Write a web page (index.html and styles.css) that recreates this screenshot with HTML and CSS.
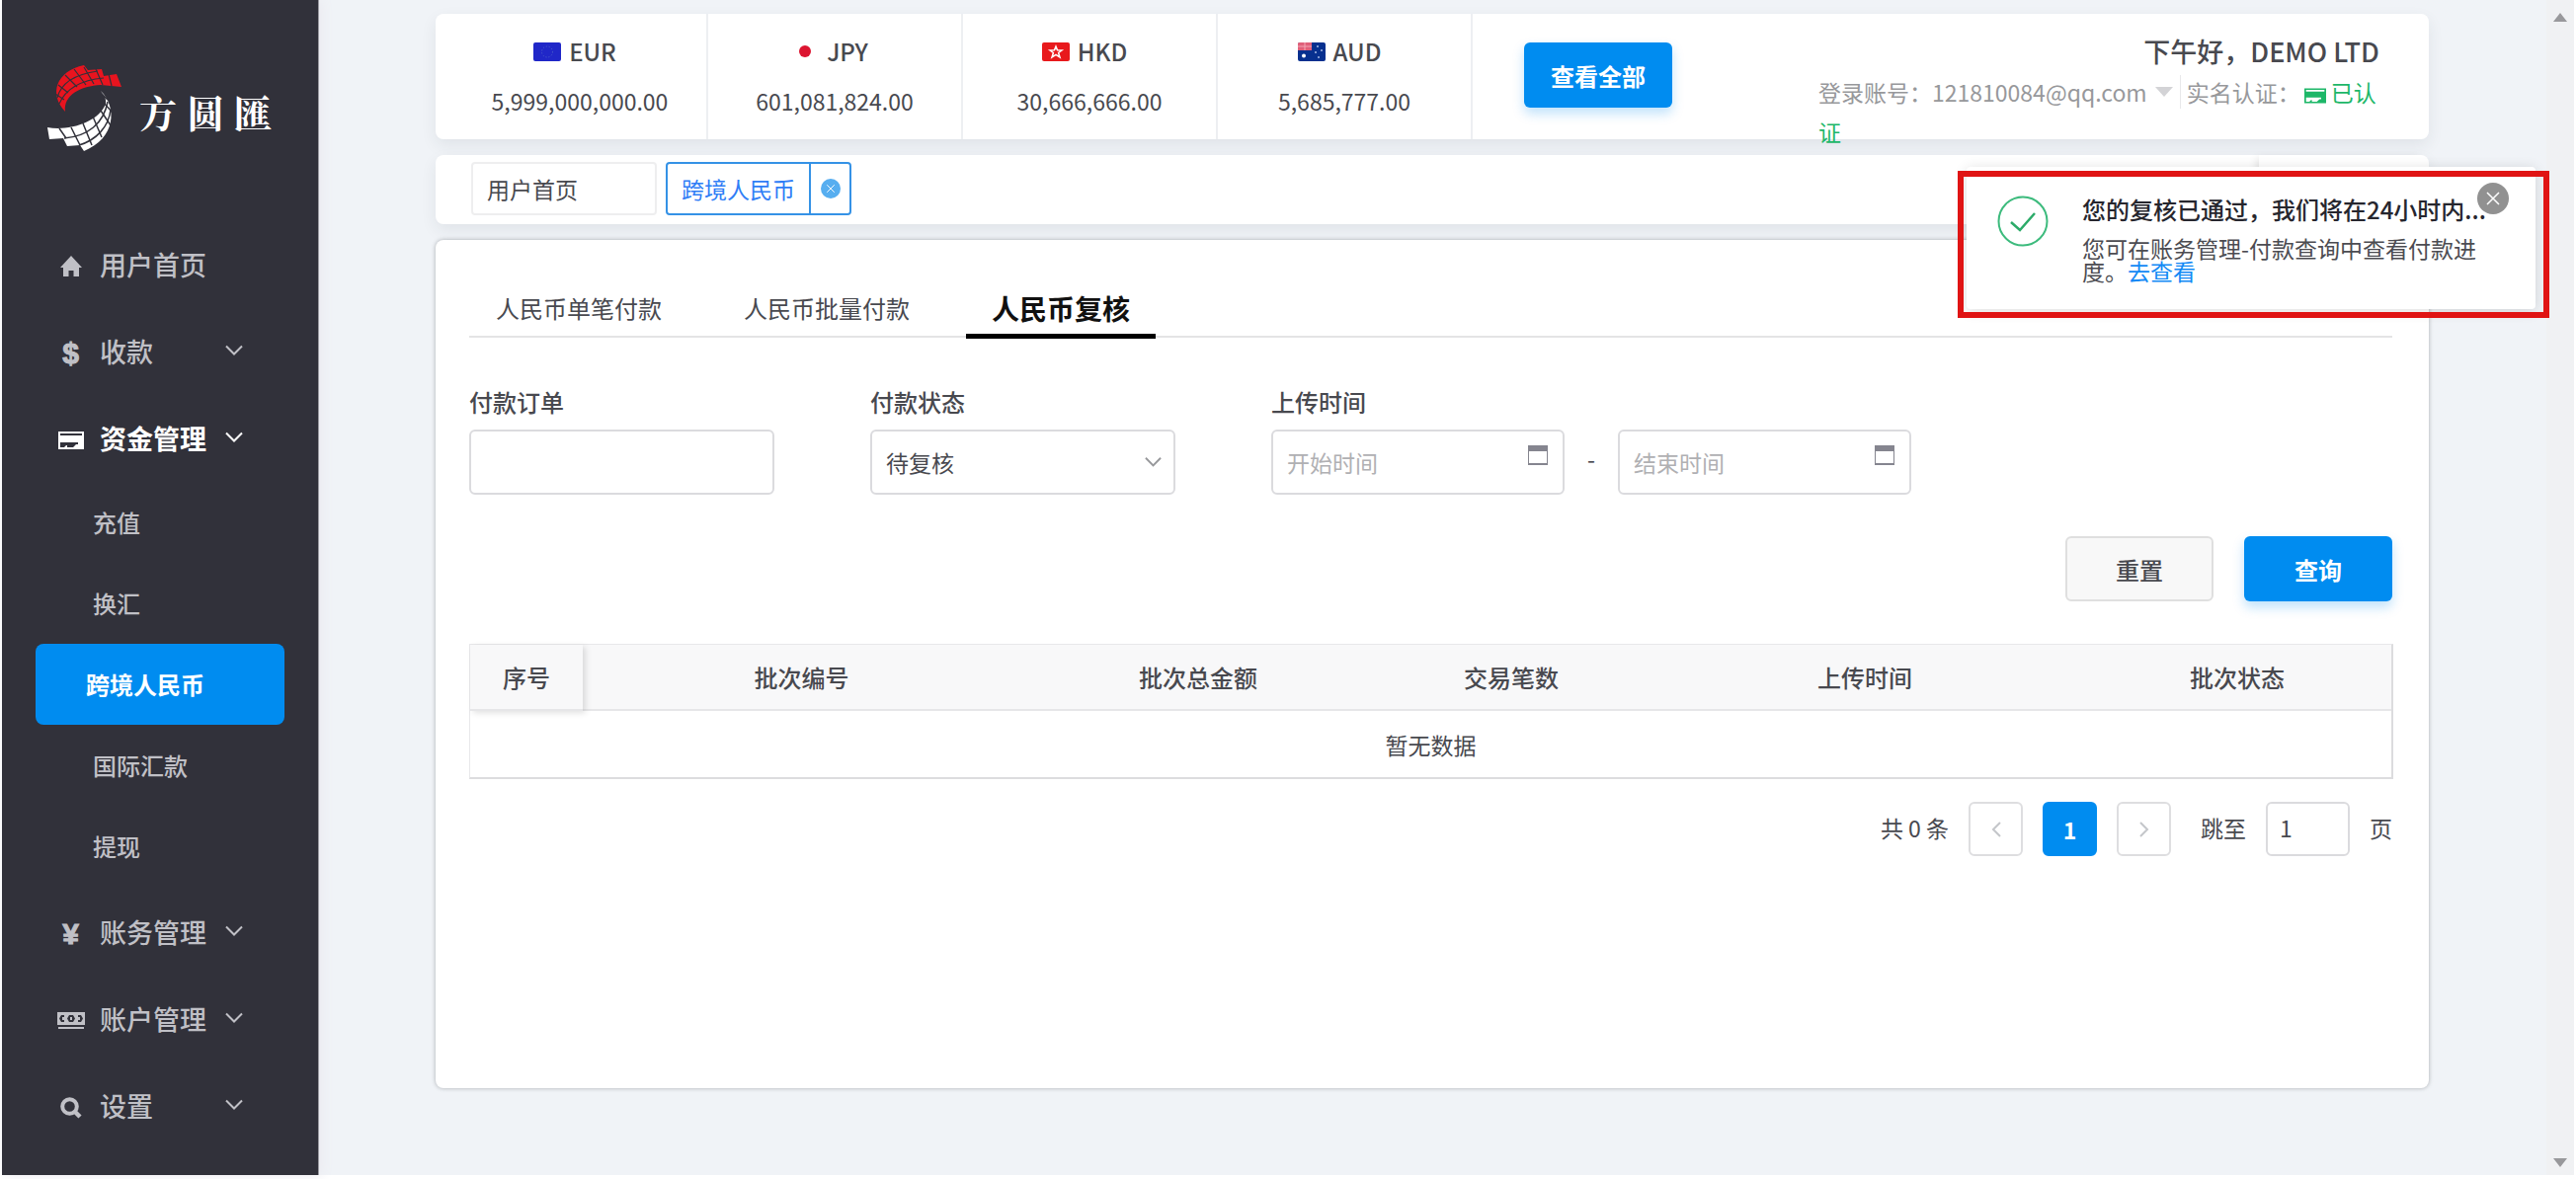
FILE: index.html
```html
<!DOCTYPE html>
<html lang="zh-CN">
<head>
<meta charset="utf-8">
<title>方圆匯 - 人民币复核</title>
<link rel="stylesheet" href="styles.css">
</head>
<body>
<svg class="defs" aria-hidden="true">
  <symbol id="chevron" viewBox="0 0 18 12"><path d="M1 1.500L9 9.500L17 1.500" fill="none" stroke="currentColor" stroke-width="2"/></symbol>
  <symbol id="card" viewBox="0 0 26 18"><path fill="currentColor" fill-rule="evenodd" d="M0 0H26V18H0ZM2 2V4H24V2ZM2 11V16H6L8 14H9V16H15L18 13H20V11Z"/></symbol>
  <symbol id="calendar" viewBox="0 0 20 20"><path fill="currentColor" fill-rule="evenodd" d="M0 0H20V20H0ZM1 6V18H19V6Z"/></symbol>
  <symbol id="close" viewBox="0 0 32 32"><circle cx="16" cy="16" r="16" fill="currentColor"/><path d="M10 10L22 22M22 10L10 22" stroke="#fff" stroke-width="1.500"/></symbol>
</svg>
<div class="shell">
  <aside class="sidebar">
    <div class="brand">
      <svg class="brand-mark" viewBox="0 0 78 92" aria-hidden="true">
        <path fill="#e8141f" d="M19 50C2 32 10 9 38 3L42 8L56 7L58 14L71 12L76 25L55 23C35 24 17 33 19 50Z"/>
        <g fill="none" stroke="#31313a" stroke-width="1.200"><path d="M11 36C15 20 30 12 52 9M13 42C20 26 36 18 58 16"/><path d="M12 23L22 31M19 13L31 25M28 7L40 23M38 5L48 22M50 7L57 23M63 12L66 24M9 32L18 38"/></g>
        <path fill="#fff" d="M1 66C22 70 53 61 60 42C61 36 57 32 55 29C72 46 70 77 38 90L34 84L21 85L17 77L3 78Z"/>
        <g fill="none" stroke="#31313a" stroke-width="1.500"><path d="M18 77C42 75 58 62 62 40M33 84C50 79 63 66 65 48"/><path d="M13 67L20 77M25 66L34 84M37 62L46 84M47 55L56 76M53 46L65 64M56 39L67 51M57 33L62 38"/></g>
      </svg>
      <div class="brand-name"><span>方</span><span>圆</span><span>匯</span></div>
    </div>
    <nav class="menu">
      <a class="item" href="#"><svg viewBox="0 0 22 22" width="22" height="22"><path fill="currentColor" d="M11 0L22 12H19V21H13.500V15H8.500V21H3V12H0Z"/></svg><span>用户首页</span></a>
      <a class="item" href="#"><b class="sign">$</b><span>收款</span><svg class="chev"><use href="#chevron"/></svg></a>
      <a class="item current" href="#"><svg width="26" height="18"><use href="#card"/></svg><span>资金管理</span><svg class="chev"><use href="#chevron"/></svg></a>
      <div class="submenu">
        <a href="#">充值</a>
        <a href="#">换汇</a>
        <a class="active" href="#">跨境人民币</a>
        <a href="#">国际汇款</a>
        <a href="#">提现</a>
      </div>
      <a class="item" href="#"><b class="sign">¥</b><span>账务管理</span><svg class="chev"><use href="#chevron"/></svg></a>
      <a class="item" href="#"><svg viewBox="0 0 28 18" width="28" height="18"><path fill="currentColor" fill-rule="evenodd" d="M0 0H28V13H0ZM4 3L2 6.500L4 10H7V8H5V5H7V3ZM12 3L10 6.500L12 10H16L18 6.500L16 3ZM13 5H15V8H13ZM21 3V5H23V8H21V10H24L26 6.500L24 3Z"/><path fill="currentColor" d="M1 15H27V17H1Z"/></svg><span>账户管理</span><svg class="chev"><use href="#chevron"/></svg></a>
      <a class="item" href="#"><svg viewBox="0 0 22 22" width="22" height="22"><circle cx="9.500" cy="9.500" r="7.300" fill="none" stroke="currentColor" stroke-width="4"/><path d="M14 14L20 20" stroke="currentColor" stroke-width="4.500"/></svg><span>设置</span><svg class="chev"><use href="#chevron"/></svg></a>
    </nav>
  </aside>

  <main class="content">
    <header class="topbar">
      <div class="currency">
        <div class="code"><svg viewBox="0 0 28 19" width="28" height="19"><rect width="28" height="19" rx="2" fill="#2027c8"/><circle cx="14" cy="9.500" r="5.500" fill="none" stroke="#4d64c8" stroke-dasharray="1 2"/></svg>EUR</div>
        <div class="amount">5,999,000,000.00</div>
      </div>
      <div class="currency">
        <div class="code"><svg viewBox="0 0 28 19" width="28" height="19"><circle cx="14" cy="9" r="6" fill="#dc1430"/></svg>JPY</div>
        <div class="amount">601,081,824.00</div>
      </div>
      <div class="currency">
        <div class="code"><svg viewBox="0 0 28 19" width="28" height="19"><rect width="28" height="19" rx="2" fill="#e8191c"/><path d="M14 4L15.500 7.800L20 8L16.600 10.500L18 15L14 12.400L10 15L11.400 10.500L8 8L12.500 7.800Z" fill="#e8191c" stroke="#fff" stroke-width="1.500"/></svg>HKD</div>
        <div class="amount">30,666,666.00</div>
      </div>
      <div class="currency">
        <div class="code"><svg viewBox="0 0 28 19" width="28" height="19"><rect width="28" height="19" rx="2" fill="#07308f"/><path d="M1 0H14V8H0V1Z" fill="#e0607a"/><path d="M0 4H14M7 0V8" stroke="#f3a6b4" stroke-width="1"/><circle cx="6" cy="13.500" r="2" fill="#fff"/><path d="M20 3V5M18 9V11M24 7V9M21 14V16" stroke="#a9bbe6" stroke-width="1.500"/></svg>AUD</div>
        <div class="amount">5,685,777.00</div>
      </div>
      <button class="btn primary view-all" type="button">查看全部</button>
      <div class="account">
        <div class="greeting">下午好，DEMO LTD</div>
        <div class="details">登录账号：121810084@qq.com<i class="caret"></i><span class="verify">实名认证：</span><span class="verified"><svg width="22" height="16"><use href="#card"/></svg>已认证</span></div>
      </div>
    </header>

    <nav class="page-tabs">
      <a class="page-tab" href="#">用户首页</a>
      <div class="page-tab open"><a href="#">跨境人民币</a><button type="button" aria-label="关闭"><svg width="20" height="20"><use href="#close"/></svg></button></div>
      <div class="tab-tools"></div>
    </nav>

    <section class="panel">
      <nav class="tabs">
        <a href="#">人民币单笔付款</a>
        <a href="#">人民币批量付款</a>
        <a class="active" href="#">人民币复核</a>
      </nav>
      <form class="filters">
        <div class="field">
          <label for="order">付款订单</label>
          <input id="order" type="text">
        </div>
        <div class="field">
          <label for="status">付款状态</label>
          <div class="control"><select id="status"><option>待复核</option></select><svg class="select-arrow"><use href="#chevron"/></svg></div>
        </div>
        <div class="field">
          <label for="start">上传时间</label>
          <div class="range">
            <div class="control date"><input id="start" type="text" placeholder="开始时间"><svg class="cal"><use href="#calendar"/></svg></div>
            <span class="dash">-</span>
            <div class="control date"><input type="text" placeholder="结束时间" aria-label="结束时间"><svg class="cal"><use href="#calendar"/></svg></div>
          </div>
        </div>
      </form>
      <div class="actions">
        <button class="btn" type="button">重置</button>
        <button class="btn primary" type="button">查询</button>
      </div>
      <table class="data">
        <colgroup><col class="c1"><col class="c2"><col class="c3"><col class="c4"><col class="c5"><col class="c6"></colgroup>
        <thead><tr><th>序号</th><th>批次编号</th><th>批次总金额</th><th>交易笔数</th><th>上传时间</th><th>批次状态</th></tr></thead>
        <tbody><tr><td colspan="6">暂无数据</td></tr></tbody>
      </table>
      <div class="pager">
        <span class="total">共 0 条</span>
        <button type="button" aria-label="上一页"><svg viewBox="0 0 12 18" width="12" height="18"><path d="M10 2L3 9L10 16" fill="none" stroke="#c4c6ca" stroke-width="2"/></svg></button>
        <button class="active" type="button">1</button>
        <button type="button" aria-label="下一页"><svg viewBox="0 0 12 18" width="12" height="18"><path d="M2 2L9 9L2 16" fill="none" stroke="#c4c6ca" stroke-width="2"/></svg></button>
        <label class="jump" for="page">跳至</label>
        <input id="page" type="text" value="1">
        <span>页</span>
      </div>
    </section>
  </main>

  <div class="scrollbar" aria-hidden="true"><i class="up"></i><i class="down"></i></div>

  <div class="highlight">
    <div class="notice" role="status">
      <svg class="ok" viewBox="0 0 52 52" aria-hidden="true"><circle cx="26" cy="26" r="24.500" fill="none" stroke="#3dbb7d" stroke-width="2"/><path d="M14 27L23 35L38 18" fill="none" stroke="#2cab69" stroke-width="2.500"/></svg>
      <div class="message">
        <strong>您的复核已通过，我们将在24小时内...</strong>
        <p>您可在账务管理-付款查询中查看付款进度。<a href="#">去查看</a></p>
      </div>
      <button type="button" aria-label="关闭通知"><svg width="32" height="32"><use href="#close"/></svg></button>
    </div>
  </div>
</div>
</body>
</html>
```
FILE: styles.css
```css
* { box-sizing: border-box; }

body {
  margin: 0;
  padding: 0 2px 4px;
  background: #fff;
  color: #48494f;
  font-family: "Noto Sans CJK SC", sans-serif;
  font-size: 23px;
}

a { color: inherit; text-decoration: none; }
button, input, select { font: inherit; color: inherit; }
button { cursor: pointer; }
.defs { display: none; }

.shell {
  position: relative;
  display: flex;
  min-height: calc(100vh - 4px);
  background: #f0f3f7;
}

/* Sidebar */
.sidebar {
  flex: 0 0 320px;
  background: #31313a;
  color: #c0c0c6;
  box-shadow: 1px 0 0 #9c9ca3, 4px 0 12px #ebeaf0;
}

.brand {
  display: flex;
  align-items: flex-start;
  padding: 63px 0 0 45px;
  height: 223px;
}

.brand-mark { width: 78px; height: 92px; }

.brand-name {
  display: flex;
  gap: 10px;
  margin: 23px 0 0 16px;
  color: #fff;
  font-family: "Noto Serif CJK SC", "Noto Sans CJK SC", serif;
  font-size: 38px;
  font-weight: 700;
  line-height: 54px;
}

.item {
  display: grid;
  grid-template-columns: 59px 127px 18px;
  align-items: center;
  height: 88px;
  padding-left: 40px;
  font-size: 27px;
  font-weight: 500;
}

.item > :first-child { justify-self: center; margin-top: 6px; }
.sign { font-family: "Liberation Sans", sans-serif; font-size: 30px; line-height: 36px; -webkit-text-stroke: 1px; }
.chev { width: 18px; height: 12px; }
.current { color: #fff; font-weight: 700; }

.submenu { padding: 1px 34px; font-size: 24px; font-weight: 500; }
.submenu a { display: block; padding-left: 58px; line-height: 82px; }
.submenu .active {
  padding-left: 51px;
  border-radius: 8px;
  background: #008cf0;
  color: #fff;
  font-weight: 700;
}

/* Page */
.content {
  flex: 1;
  display: flex;
  flex-direction: column;
  gap: 16px;
  min-width: 0;
  padding: 14px 119px 88px;
}

.topbar {
  display: flex;
  height: 127px;
  padding-left: 18px;
  border-radius: 8px;
  background: #fff;
  box-shadow: 0 6px 16px rgba(40, 50, 60, 0.08);
}

.currency {
  flex: 0 0 258px;
  padding-top: 13px;
  border-right: 2px solid #edeff2;
  line-height: 50px;
  text-align: center;
}

.code {
  display: flex;
  align-items: center;
  justify-content: center;
  gap: 8px;
  margin-right: 10px;
  font-size: 24px;
  font-weight: 500;
}

.btn {
  width: 150px;
  height: 66px;
  padding: 0;
  border: 2px solid #dfdfdf;
  border-radius: 6px;
  background: #f8f8f8;
  font-size: 24px;
  font-weight: 500;
}

.btn.primary {
  border: 0;
  background: #008cf0;
  color: #fff;
  font-weight: 700;
  box-shadow: 0 6px 12px rgba(0, 140, 240, 0.25);
}

.view-all { margin: 29px 0 0 52px; }

.account { width: 568px; margin: 17px 50px 0 auto; }
.greeting { font-size: 27px; font-weight: 500; line-height: 42px; text-align: right; }
.details { color: #97989b; line-height: 40px; }

.caret {
  display: inline-block;
  margin: 0 7px 5px 8px;
  border: 9px solid transparent;
  border-top: 10px solid #d3d3d6;
  border-bottom: 0;
}

.verify { padding-left: 6px; border-left: 1px solid #e8e8ea; }
.verified { color: #1db768; }
.verified svg { margin: 0 5px 0 4px; vertical-align: -2px; }

.page-tabs {
  display: flex;
  gap: 9px;
  height: 70px;
  padding: 7px 0 9px 36px;
  border-radius: 8px;
  background: #fff;
  box-shadow: 0 6px 16px rgba(40, 50, 60, 0.08);
}

.page-tab {
  width: 188px;
  padding-left: 14px;
  border: 2px solid #eeeeef;
  border-radius: 4px;
  line-height: 50px;
}

.page-tab.open {
  display: flex;
  justify-content: space-between;
  border-color: #3592e6;
  color: #2f7df6;
}

.page-tab button {
  width: 41px;
  padding: 0;
  border: 0;
  border-left: 2px solid #3592e6;
  background: none;
  color: #57aef0;
  line-height: 0;
}

.tab-tools {
  width: 172px;
  margin: -7px 0 -9px auto;
  border-radius: 0 8px 8px 0;
  box-shadow: -6px 0 10px -4px rgba(0, 0, 0, 0.12);
}

/* Review panel */
.panel {
  flex: 1;
  padding: 43px 37px 0 34px;
  border-radius: 8px;
  background: #fff;
  box-shadow: 0 0 4px rgba(60, 65, 70, 0.4);
}

.tabs {
  display: flex;
  gap: 31px;
  padding-left: 1px;
  border-bottom: 2px solid #e4e4e5;
  font-size: 24px;
}

.tabs a {
  margin-bottom: -3px;
  padding: 0 26px;
  border-bottom: 5px solid transparent;
  line-height: 52px;
}

.tabs .active { border-color: #000; color: #111; font-size: 28px; font-weight: 700; }

.filters { display: flex; gap: 97px; margin-top: 47px; }
.field { width: 309px; }
.field:last-child { width: auto; }
.field > label { display: block; margin-bottom: 10px; font-size: 24px; font-weight: 500; line-height: 36px; }

.field input, .field select, .pager input {
  display: block;
  width: 100%;
  height: 66px;
  padding: 0 14px;
  border: 2px solid #dbdbde;
  border-radius: 6px;
  background: #fff;
  appearance: none;
  outline: 0;
}

.field input::placeholder { color: #b0b0b3; }
.control { position: relative; }
.select-arrow { position: absolute; right: 14px; top: 27px; width: 17px; height: 12px; color: #97989b; }
.range { display: flex; align-items: center; }
.date { width: 297px; }
.cal { position: absolute; right: 17px; top: 16px; width: 20px; height: 20px; color: #85858f; }
.dash { width: 54px; padding-bottom: 8px; text-align: center; }

.actions { display: flex; justify-content: flex-end; gap: 31px; margin-top: 42px; }

.data {
  width: 100%;
  margin-top: 43px;
  border-spacing: 0;
  border: 1px solid #e8e8ea;
  border-right: 2px solid #dcdcde;
  border-bottom: 2px solid #dcdcde;
  table-layout: fixed;
  text-align: center;
}

/* Relative widths; the table spreads them over its own width */
.c1 { width: 114px; }
.c2 { width: 443px; }
.c3 { width: 360px; }
.c4 { width: 274px; }
.c5 { width: 442px; }
.c6 { width: 312px; }

th { height: 67px; padding: 0; border-bottom: 2px solid #e6e6e8; background: #f8f8f9; font-size: 24px; font-weight: 500; }
th:first-child { position: relative; box-shadow: 3px 2px 6px rgba(0, 0, 0, 0.12); }
td { height: 67px; padding: 0; }

.pager { display: flex; align-items: center; justify-content: flex-end; gap: 20px; margin-top: 23px; line-height: 50px; }
.pager > span, .jump { padding-bottom: 4px; }
.pager button {
  width: 55px;
  height: 55px;
  padding: 0;
  border: 2px solid #dedee0;
  border-radius: 6px;
  background: #fff;
  line-height: 0;
}
.pager .active { border-color: #008cf0; background: #008cf0; color: #fff; font-weight: 700; }
.pager input { width: 85px; height: 55px; padding: 0 12px 4px; }
.jump { margin-left: 10px; }

/* Window scrollbar */
.scrollbar {
  flex: 0 0 28px;
  display: flex;
  flex-direction: column;
  justify-content: space-between;
  align-items: center;
  padding: 13px 0 8px;
  background: #f0f1f3;
}
.scrollbar i { border: 7px solid transparent; }
.scrollbar .up { border-top: 0; border-bottom: 9px solid #98989b; }
.scrollbar .down { border-bottom: 0; border-top: 9px solid #98989b; }

/* Notification overlay, with its frame drawn above the card */
.highlight {
  position: absolute;
  z-index: 1;
  top: 173px;
  right: 25px;
  width: 599px;
  height: 149px;
}

.highlight::after {
  content: "";
  position: absolute;
  inset: 0;
  border: 6px solid #e01414;
  pointer-events: none;
}

.notice {
  position: absolute;
  inset: -4px 14px 9px 9px;
  display: flex;
  padding: 29px 0 0 31px;
  border-radius: 4px;
  background: #fff;
  box-shadow: 0 2px 14px rgba(0, 0, 0, 0.14);
  color: #4c4c52;
}

.ok { width: 52px; height: 52px; }
.message { width: 410px; margin-left: 34px; }
.message strong { display: block; color: #26262e; font-size: 24px; font-weight: 500; line-height: 28px; white-space: nowrap; }
.message p { margin: 14px 0 0; line-height: 23px; }
.message a { color: #1389f5; }

.notice button {
  position: absolute;
  top: 16px;
  right: 27px;
  width: 32px;
  height: 32px;
  padding: 0;
  border: 0;
  background: none;
  color: #919191;
  line-height: 0;
}
```
